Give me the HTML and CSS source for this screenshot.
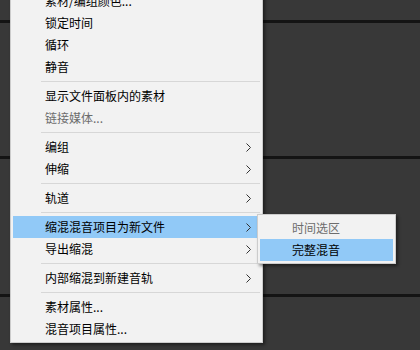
FILE: index.html
```html
<!DOCTYPE html>
<html lang="zh-CN">

<head>
  <meta charset="UTF-8">
  <title>缩混菜单</title>
  <link rel="stylesheet" href="styles.css">
</head>

<body>
  <div class="tracks">
    <div class="track track-top"></div>
    <div class="track track-mid"></div>
    <div class="track track-low"></div>
  </div>

  <div class="menu main-menu">
    <div class="item">素材/编组颜色...</div>
    <div class="item">锁定时间</div>
    <div class="item">循环</div>
    <div class="item">静音</div>
    <div class="sep"></div>
    <div class="item">显示文件面板内的素材</div>
    <div class="item disabled">链接媒体...</div>
    <div class="sep"></div>
    <div class="item has-sub">编组<svg class="chev" viewBox="0 0 5 9"><polyline points="0.5,0.5 4.5,4.5 0.5,8.5"/></svg></div>
    <div class="item has-sub">伸缩<svg class="chev" viewBox="0 0 5 9"><polyline points="0.5,0.5 4.5,4.5 0.5,8.5"/></svg></div>
    <div class="sep"></div>
    <div class="item has-sub">轨道<svg class="chev" viewBox="0 0 5 9"><polyline points="0.5,0.5 4.5,4.5 0.5,8.5"/></svg></div>
    <div class="sep"></div>
    <div class="item has-sub active">缩混混音项目为新文件<svg class="chev" viewBox="0 0 5 9"><polyline points="0.5,0.5 4.5,4.5 0.5,8.5"/></svg></div>
    <div class="item has-sub">导出缩混<svg class="chev" viewBox="0 0 5 9"><polyline points="0.5,0.5 4.5,4.5 0.5,8.5"/></svg></div>
    <div class="sep"></div>
    <div class="item has-sub">内部缩混到新建音轨<svg class="chev" viewBox="0 0 5 9"><polyline points="0.5,0.5 4.5,4.5 0.5,8.5"/></svg></div>
    <div class="sep"></div>
    <div class="item">素材属性...</div>
    <div class="item">混音项目属性...</div>
  </div>

  <div class="menu sub-menu">
    <div class="item disabled">时间选区</div>
    <div class="item active">完整混音</div>
  </div>
</body>

</html>
```

FILE: styles.css
```css
* {
  box-sizing: border-box;
}

body {
  margin: 0;
  background-color: #383838;
  font-family: "Noto Sans CJK SC", "Noto Sans", sans-serif;
  font-size: 12px;
  color: #000000;
  overflow: hidden;
}

.track {
  border-bottom: 3px solid #141414;
}

.track-top {
  height: 23px;
}

.track-mid {
  height: 136px;
}

.track-low {
  height: 138px;
}

/* context menus sit over the track view */
.menu {
  position: absolute;
  background-color: #f2f2f2;
  border: 1px solid #cccccc;
  padding: 2px;
  box-shadow: 2px 2px 3px rgba(0, 0, 0, 0.45);
}

.main-menu {
  left: 10px;
  top: -13px;
  width: 253px;
}

.sub-menu {
  left: 257px;
  top: 214px;
  width: 139px;
}

.item {
  height: 22px;
  line-height: 22px;
  padding-left: 32px;
  padding-right: 9px;
  display: flex;
  align-items: center;
  white-space: nowrap;
}

.item.disabled {
  color: #6d6d6d;
}

.item.active {
  background-color: #91c9f7;
}

.has-sub {
  justify-content: space-between;
}

.chev {
  width: 5px;
  height: 9px;
  fill: none;
  stroke: #333333;
  stroke-width: 1;
}

.sep {
  height: 7px;
  margin-left: 28px;
  display: flex;
  align-items: center;
}

.sep::after {
  content: "";
  flex: 1;
  height: 1px;
  background-color: #d7d7d7;
}
```
